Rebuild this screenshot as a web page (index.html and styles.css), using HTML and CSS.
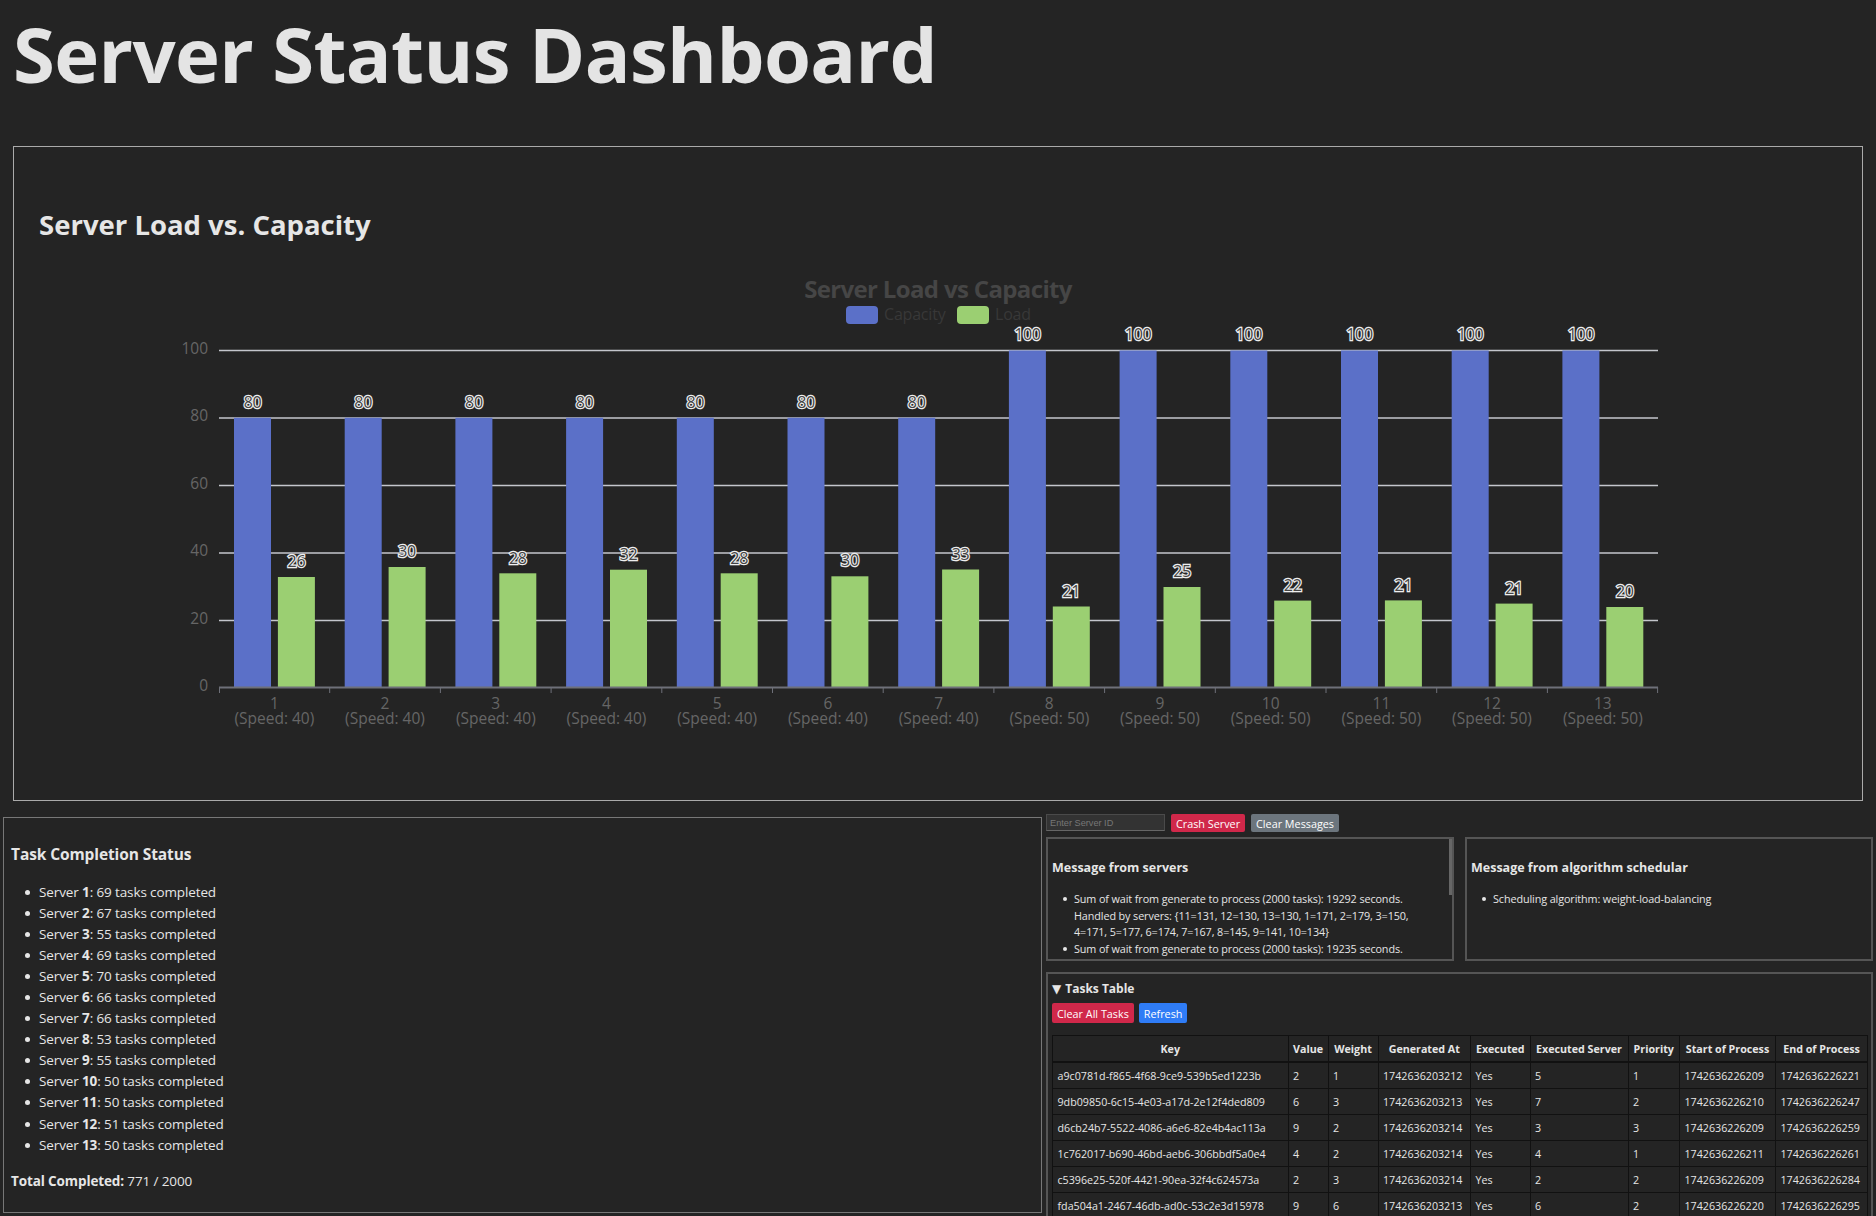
FILE: index.html
```html
<!DOCTYPE html>
<html lang="en">
<head>
<meta charset="UTF-8">
<title>Server Status Dashboard</title>
<link rel="stylesheet" href="styles.css">
</head>
<body>

<h1>Server Status Dashboard</h1>

<section class="chart-panel">
  <h2>Server Load vs. Capacity</h2>
  <!-- viewBox uses page coordinates so the bars are easy to line up -->
  <svg class="chart" viewBox="14 265 1848 520" width="1848" height="520">
    <text class="chart-title" x="938" y="298">Server Load vs Capacity</text>
    <rect class="blue" x="846" y="306" width="32" height="18" rx="4"/>
    <text class="legend-text" x="884" y="320">Capacity</text>
    <rect class="green" x="957" y="306" width="32" height="18" rx="4"/>
    <text class="legend-text" x="995" y="320">Load</text>

    <g class="grid">
      <line x1="219" x2="1658" y1="350.5" y2="350.5"/>
      <line x1="219" x2="1658" y1="418" y2="418"/>
      <line x1="219" x2="1658" y1="485.5" y2="485.5"/>
      <line x1="219" x2="1658" y1="553" y2="553"/>
      <line x1="219" x2="1658" y1="620.5" y2="620.5"/>
    </g>

    <g class="axis-y">
      <text x="208" y="354">100</text>
      <text x="208" y="421">80</text>
      <text x="208" y="489">60</text>
      <text x="208" y="556">40</text>
      <text x="208" y="624">20</text>
      <text x="208" y="691">0</text>
    </g>

    <g class="blue">
      <rect x="234" y="417.8" width="37" height="269.2"/>
      <rect x="344.7" y="417.8" width="37" height="269.2"/>
      <rect x="455.4" y="417.8" width="37" height="269.2"/>
      <rect x="566.1" y="417.8" width="37" height="269.2"/>
      <rect x="676.8" y="417.8" width="37" height="269.2"/>
      <rect x="787.5" y="417.8" width="37" height="269.2"/>
      <rect x="898.2" y="417.8" width="37" height="269.2"/>
      <rect x="1008.9" y="350.5" width="37" height="336.5"/>
      <rect x="1119.6" y="350.5" width="37" height="336.5"/>
      <rect x="1230.3" y="350.5" width="37" height="336.5"/>
      <rect x="1341" y="350.5" width="37" height="336.5"/>
      <rect x="1451.7" y="350.5" width="37" height="336.5"/>
      <rect x="1562.4" y="350.5" width="37" height="336.5"/>
    </g>

    <g class="green">
      <rect x="277.9" y="577" width="37" height="110"/>
      <rect x="388.6" y="567" width="37" height="120"/>
      <rect x="499.3" y="573.3" width="37" height="113.7"/>
      <rect x="610" y="569.7" width="37" height="117.3"/>
      <rect x="720.7" y="573.3" width="37" height="113.7"/>
      <rect x="831.4" y="576.3" width="37" height="110.7"/>
      <rect x="942.1" y="569.5" width="37" height="117.5"/>
      <rect x="1052.8" y="606.5" width="37" height="80.5"/>
      <rect x="1163.5" y="587" width="37" height="100"/>
      <rect x="1274.2" y="600.6" width="37" height="86.4"/>
      <rect x="1384.9" y="600.4" width="37" height="86.6"/>
      <rect x="1495.6" y="603.6" width="37" height="83.4"/>
      <rect x="1606.3" y="607" width="37" height="80"/>
    </g>

    <g class="bar-labels">
      <text x="252.5" y="408">80</text>
      <text x="363.2" y="408">80</text>
      <text x="473.9" y="408">80</text>
      <text x="584.6" y="408">80</text>
      <text x="695.3" y="408">80</text>
      <text x="806" y="408">80</text>
      <text x="916.7" y="408">80</text>
      <text x="1027.4" y="340">100</text>
      <text x="1138.1" y="340">100</text>
      <text x="1248.8" y="340">100</text>
      <text x="1359.5" y="340">100</text>
      <text x="1470.2" y="340">100</text>
      <text x="1580.9" y="340">100</text>
      <text x="296.4" y="567">26</text>
      <text x="407.1" y="557">30</text>
      <text x="517.8" y="564">28</text>
      <text x="628.5" y="560">32</text>
      <text x="739.2" y="564">28</text>
      <text x="849.9" y="566">30</text>
      <text x="960.6" y="560">33</text>
      <text x="1071.3" y="597">21</text>
      <text x="1182" y="577">25</text>
      <text x="1292.7" y="591">22</text>
      <text x="1403.4" y="591">21</text>
      <text x="1514.1" y="594">21</text>
      <text x="1624.8" y="597">20</text>
    </g>

    <g class="axis-x">
      <line x1="219" x2="1658" y1="687.5" y2="687.5"/>
      <path d="M219.5 687v6M329.7 687v6M440.4 687v6M551.1 687v6M661.8 687v6M772.5 687v6M883.2 687v6M993.9 687v6M1104.6 687v6M1215.3 687v6M1326 687v6M1436.7 687v6M1547.4 687v6M1657.6 687v6"/>
      <text x="274.4" y="709">1</text><text x="274.4" y="724">(Speed: 40)</text>
      <text x="385" y="709">2</text><text x="385" y="724">(Speed: 40)</text>
      <text x="495.8" y="709">3</text><text x="495.8" y="724">(Speed: 40)</text>
      <text x="606.5" y="709">4</text><text x="606.5" y="724">(Speed: 40)</text>
      <text x="717.2" y="709">5</text><text x="717.2" y="724">(Speed: 40)</text>
      <text x="827.9" y="709">6</text><text x="827.9" y="724">(Speed: 40)</text>
      <text x="938.6" y="709">7</text><text x="938.6" y="724">(Speed: 40)</text>
      <text x="1049.3" y="709">8</text><text x="1049.3" y="724">(Speed: 50)</text>
      <text x="1160" y="709">9</text><text x="1160" y="724">(Speed: 50)</text>
      <text x="1270.7" y="709">10</text><text x="1270.7" y="724">(Speed: 50)</text>
      <text x="1381.4" y="709">11</text><text x="1381.4" y="724">(Speed: 50)</text>
      <text x="1492" y="709">12</text><text x="1492" y="724">(Speed: 50)</text>
      <text x="1602.8" y="709">13</text><text x="1602.8" y="724">(Speed: 50)</text>
    </g>
  </svg>
</section>

<div class="bottom">

  <section class="status-panel">
    <h3>Task Completion Status</h3>
    <ul>
      <li>Server <strong>1</strong>: 69 tasks completed</li>
      <li>Server <strong>2</strong>: 67 tasks completed</li>
      <li>Server <strong>3</strong>: 55 tasks completed</li>
      <li>Server <strong>4</strong>: 69 tasks completed</li>
      <li>Server <strong>5</strong>: 70 tasks completed</li>
      <li>Server <strong>6</strong>: 66 tasks completed</li>
      <li>Server <strong>7</strong>: 66 tasks completed</li>
      <li>Server <strong>8</strong>: 53 tasks completed</li>
      <li>Server <strong>9</strong>: 55 tasks completed</li>
      <li>Server <strong>10</strong>: 50 tasks completed</li>
      <li>Server <strong>11</strong>: 50 tasks completed</li>
      <li>Server <strong>12</strong>: 51 tasks completed</li>
      <li>Server <strong>13</strong>: 50 tasks completed</li>
    </ul>
    <p><strong>Total Completed:</strong> 771 / 2000</p>
  </section>

  <div class="right-col">
    <div class="controls">
      <input type="number" class="server-input" placeholder="Enter Server ID">
      <button class="btn btn-red">Crash Server</button>
      <button class="btn btn-gray">Clear Messages</button>
    </div>

    <div class="messages">
      <section class="message-box">
        <h4>Message from servers</h4>
        <ul>
          <li>Sum of wait from generate to process (2000 tasks): 19292 seconds.<br>Handled by servers: {11=131, 12=130, 13=130, 1=171, 2=179, 3=150,<br>4=171, 5=177, 6=174, 7=167, 8=145, 9=141, 10=134}</li>
          <li>Sum of wait from generate to process (2000 tasks): 19235 seconds.</li>
        </ul>
        <div class="scroll-thumb"></div>
      </section>
      <section class="message-box">
        <h4>Message from algorithm schedular</h4>
        <ul>
          <li>Scheduling algorithm: weight-load-balancing</li>
        </ul>
      </section>
    </div>

    <section class="tasks-panel">
      <div class="tasks-title"><span class="caret">▼</span>Tasks Table</div>
      <div class="tasks-actions">
        <button class="btn btn-red">Clear All Tasks</button>
        <button class="btn btn-blue">Refresh</button>
      </div>
      <table class="tasks">
        <colgroup>
          <col class="c-key"><col class="c-value"><col class="c-weight"><col class="c-time"><col class="c-exec"><col class="c-server"><col class="c-prio"><col class="c-start"><col class="c-end">
        </colgroup>
        <thead>
          <tr><th>Key</th><th>Value</th><th>Weight</th><th>Generated At</th><th>Executed</th><th>Executed Server</th><th>Priority</th><th>Start of Process</th><th>End of Process</th></tr>
        </thead>
        <tbody>
          <tr><td>a9c0781d-f865-4f68-9ce9-539b5ed1223b</td><td>2</td><td>1</td><td>1742636203212</td><td>Yes</td><td>5</td><td>1</td><td>1742636226209</td><td>1742636226221</td></tr>
          <tr><td>9db09850-6c15-4e03-a17d-2e12f4ded809</td><td>6</td><td>3</td><td>1742636203213</td><td>Yes</td><td>7</td><td>2</td><td>1742636226210</td><td>1742636226247</td></tr>
          <tr><td>d6cb24b7-5522-4086-a6e6-82e4b4ac113a</td><td>9</td><td>2</td><td>1742636203214</td><td>Yes</td><td>3</td><td>3</td><td>1742636226209</td><td>1742636226259</td></tr>
          <tr><td>1c762017-b690-46bd-aeb6-306bbdf5a0e4</td><td>4</td><td>2</td><td>1742636203214</td><td>Yes</td><td>4</td><td>1</td><td>1742636226211</td><td>1742636226261</td></tr>
          <tr><td>c5396e25-520f-4421-90ea-32f4c624573a</td><td>2</td><td>3</td><td>1742636203214</td><td>Yes</td><td>2</td><td>2</td><td>1742636226209</td><td>1742636226284</td></tr>
          <tr><td>fda504a1-2467-46db-ad0c-53c2e3d15978</td><td>9</td><td>6</td><td>1742636203213</td><td>Yes</td><td>6</td><td>2</td><td>1742636226220</td><td>1742636226295</td></tr>
        </tbody>
      </table>
    </section>
  </div>

</div>

</body>
</html>
```

FILE: styles.css
```css
html, body {
  height: 100%;
  overflow: hidden;
}

body {
  margin: 0;
  background-color: #242424;
  color: #e6e6e6;
  font-family: "Open Sans", "Noto Sans", sans-serif;
}

h1 {
  margin: 0 13px;
  height: 146px;
  font-size: 76px;
  line-height: 108px;
  font-weight: 700;
  letter-spacing: -0.63px;
  color: #e4e4e4;
}

.status-panel li,
.message-box li {
  position: relative;
  list-style: none;
}

.status-panel li::before,
.message-box li::before {
  content: "";
  position: absolute;
  border-radius: 50%;
  background-color: #e6e6e6;
}

.status-panel li::before {
  top: 8px;
  left: -14px;
  width: 5px;
  height: 5px;
}

.message-box li::before {
  top: 6px;
  left: -11px;
  width: 4px;
  height: 4px;
}

/* chart */
.chart-panel {
  box-sizing: border-box;
  height: 655px;
  margin: 0 13px;
  padding-top: 59px;
  border: 1px solid #aaa;
}

.chart-panel h2 {
  margin: 0 0 21px 25px;
  height: 38px;
  font-size: 27.5px;
  line-height: 38px;
  font-weight: 700;
  color: #e6e6e6;
}

.chart {
  display: block;
}

.chart text {
  font-family: "Open Sans", "Noto Sans", sans-serif;
}

.chart-title {
  fill: #464646;
  font-size: 24px;
  font-weight: 700;
  letter-spacing: -0.65px;
  text-anchor: middle;
}

.legend-text {
  fill: #383838;
  font-size: 16px;
  letter-spacing: -0.2px;
}

.blue {
  fill: #5b70c8;
}

.green {
  fill: #9bcf72;
}

.grid line {
  stroke: #c4c6cc;
  stroke-width: 1.5;
}

.axis-y text {
  fill: #666;
  font-size: 15.5px;
  text-anchor: end;
}

.axis-x line,
.axis-x path {
  stroke: #6e7079;
  stroke-width: 1;
  fill: none;
}

.axis-x line {
  stroke-width: 2;
}

.axis-x text {
  fill: #666;
  font-size: 15.5px;
  text-anchor: middle;
}

.chart .bar-labels text {
  fill: #444;
  stroke: #eee;
  stroke-width: 2.4px;
  paint-order: stroke;
  font-size: 16px;
  letter-spacing: -0.3px;
  text-anchor: middle;
}

/* bottom area */
.bottom {
  display: flex;
  align-items: flex-start;
  gap: 4px;
  margin: 16px 3px 0;
}

.status-panel {
  box-sizing: border-box;
  width: 1039px;
  height: 396px;
  padding: 25px 7px 0;
  border: 1px solid #777;
  font-size: 13.5px;
  letter-spacing: -0.12px;
}

.status-panel h3 {
  margin: 0 0 17px;
  font-size: 15.5px;
  line-height: 22px;
  font-weight: 700;
  letter-spacing: -0.1px;
}

.status-panel ul {
  margin: 0 0 15px;
  padding-left: 28px;
}

.status-panel li {
  line-height: 21.05px;
}

.status-panel p {
  margin: 0;
  line-height: 21px;
}

.right-col {
  width: 827px;
}

.controls {
  display: flex;
  gap: 6px;
  height: 23px;
  margin-top: -3px;
}

.server-input {
  box-sizing: border-box;
  width: 119px;
  height: 17px;
  padding: 0 3px;
  background-color: #333;
  border: 1px solid #4a4a4a;
  border-bottom-color: #666;
  color: #ccc;
  font-family: "Liberation Sans", Arial, sans-serif;
  font-size: 9.2px;
}

.server-input::placeholder {
  color: #777;
}

.btn {
  height: 18px;
  padding: 0 5px;
  border: none;
  border-radius: 2px;
  color: #fff;
  font-family: "Open Sans", "Noto Sans", sans-serif;
  font-size: 10.8px;
  white-space: nowrap;
}

.btn-red {
  background-color: #d0284a;
}

.btn-gray {
  background-color: #6c757d;
}

.btn-blue {
  background-color: #2f7cf6;
}

.messages {
  display: flex;
  gap: 11px;
}

.message-box {
  position: relative;
  box-sizing: border-box;
  width: 408px;
  flex: none;
  height: 124px;
  padding: 0 4px;
  border: 2px solid #555;
  overflow: hidden;
  font-size: 10.8px;
  letter-spacing: -0.1px;
}

.scroll-thumb {
  position: absolute;
  top: 0;
  right: 0;
  width: 3px;
  height: 56px;
  background-color: #666;
}

.message-box h4 {
  margin: 20px 0 14px;
  font-size: 12.5px;
  line-height: 18px;
  font-weight: 700;
  letter-spacing: 0;
}

.message-box ul {
  margin: 0;
  padding-left: 22px;
}

.message-box li {
  line-height: 16.7px;
  white-space: nowrap;
}

.tasks-panel {
  box-sizing: border-box;
  height: 300px;
  margin-top: 11px;
  padding: 6px 4px 0;
  border: 2px solid #555;
  border-bottom: none;
}

.tasks-title {
  font-size: 12px;
  line-height: 18px;
  font-weight: 700;
}

.caret {
  margin-right: 4px;
  font-family: "DejaVu Sans", sans-serif;
  font-size: 12px;
}

.tasks-actions {
  display: flex;
  gap: 5px;
  margin-top: 5px;
  margin-bottom: 12px;
}

.tasks-actions .btn {
  height: 20px;
}

.tasks {
  table-layout: fixed;
  width: 815px;
  border-collapse: collapse;
  font-size: 10.7px;
}

.c-key { width: 235.5px; }
.c-value { width: 40px; }
.c-weight { width: 50px; }
.c-time { width: 92.5px; }
.c-exec { width: 59.5px; }
.c-server { width: 98px; }
.c-prio { width: 51.5px; }
.c-start { width: 96px; }
.c-end { width: 92px; }

.tasks th,
.tasks td {
  height: 25px;
  padding: 0 4.5px;
  border: 1px solid #111;
  white-space: nowrap;
  overflow: hidden;
  line-height: 14px;
}

.tasks th {
  height: 25px;
  border-bottom-width: 2px;
  font-weight: 700;
  text-align: center;
}

.tasks td {
  text-align: left;
}
```
